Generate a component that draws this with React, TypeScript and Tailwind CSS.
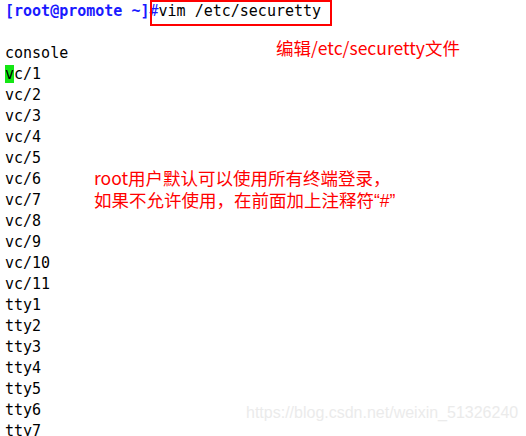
import React from "react";

const lines = [
  "console",
  "vc/1",
  "vc/2",
  "vc/3",
  "vc/4",
  "vc/5",
  "vc/6",
  "vc/7",
  "vc/8",
  "vc/9",
  "vc/10",
  "vc/11",
  "tty1",
  "tty2",
  "tty3",
  "tty4",
  "tty5",
  "tty6",
  "tty7",
];

const cjk = "font-['Microsoft_YaHei','Noto_Sans_CJK_SC',sans-serif]";

export default function App() {
  return (
    <div className="relative w-[526px] h-[436px] overflow-hidden bg-white">
      <div className="flex flex-col pl-[5px] pt-[1px] font-['DejaVu_Sans_Mono',monospace] text-[15px] leading-[21px] text-black">
        <div className="flex whitespace-pre">
          <span className="font-bold text-[#1a1aff]">[root@promote ~]</span>
          <span className="text-[#1a1aff]">#</span>
          <span>vim /etc/securetty</span>
        </div>
        <div className="h-[21px]" />
        {lines.map((l, i) => (
          <div key={i} className="whitespace-pre">
            {i === 1 ? (
              <>
                <span className="bg-[#14e614]">v</span>c/1
              </>
            ) : (
              l
            )}
          </div>
        ))}
      </div>

      <div className="absolute left-[150px] top-[0px] w-[182px] h-[26px] border-2 border-[#ff0000]" />

      <div
        className={`absolute left-[276px] top-[37px] text-[17.5px] leading-[22px] text-[#ff0000] ${cjk} whitespace-nowrap`}
      >
        编辑/etc/securetty文件
      </div>

      <div
        className={`absolute left-[94px] top-[167px] text-[17.5px] leading-[22px] text-[#ff0000] ${cjk} whitespace-nowrap`}
      >
        <div>root用户默认可以使用所有终端登录，</div>
        <div>
          如果不允许使用，在前面加上注释符
          <span className="font-['Liberation_Sans',sans-serif]">“#”</span>
        </div>
      </div>

      <div className="absolute left-[246px] top-[404px] font-['Liberation_Sans',Arial,sans-serif] text-[16px] leading-[18px] text-[#ebebeb] whitespace-nowrap">
        https://blog.csdn.net/weixin_51326240
      </div>
    </div>
  );
}
